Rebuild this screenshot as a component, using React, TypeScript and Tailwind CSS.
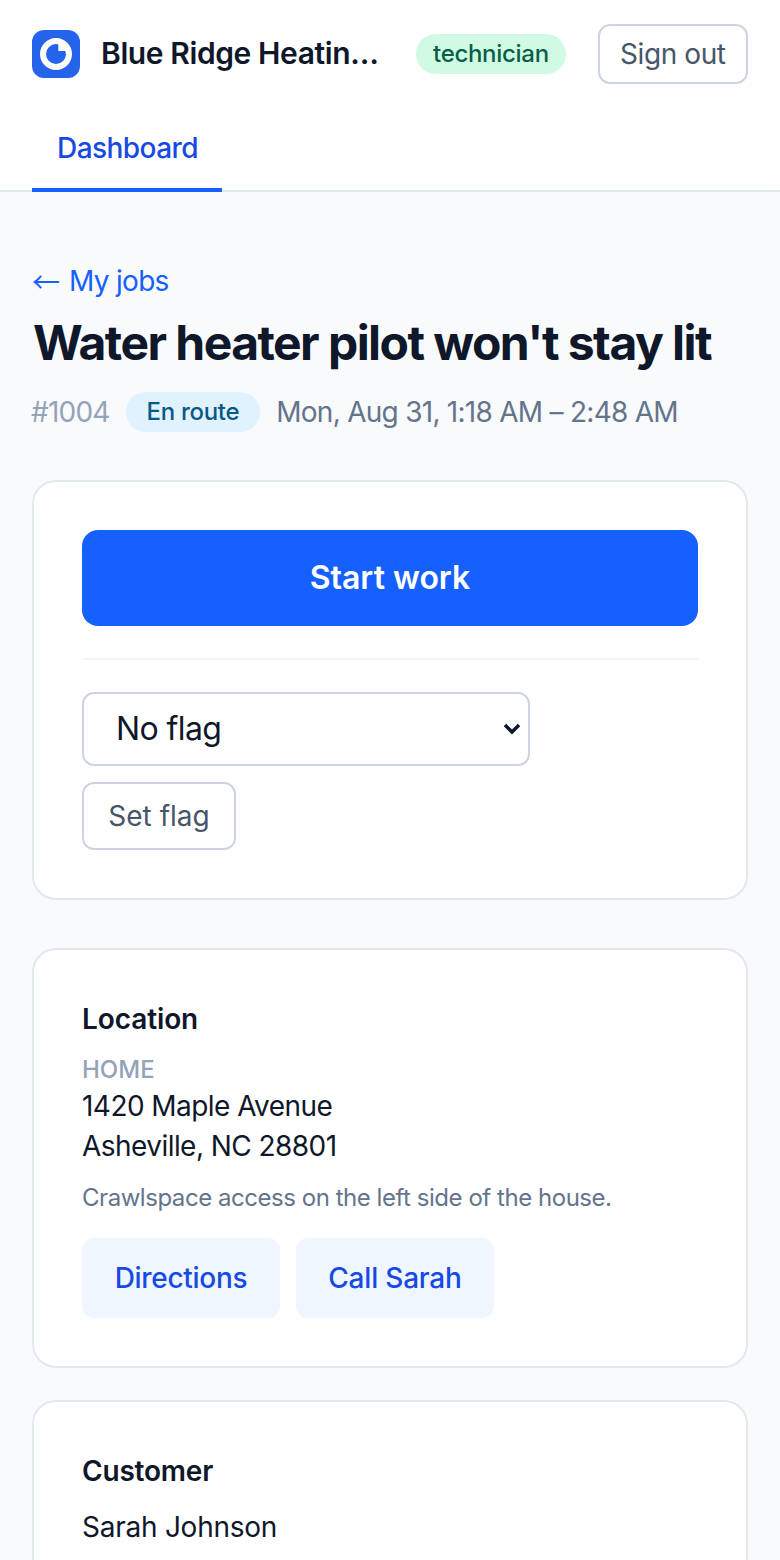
export default function App() {
  return (
    <div className="h-[1560px] overflow-hidden bg-[#f8fafc] font-['Inter',sans-serif] text-[#0f172a]">
      {/* Header */}
      <header className="border-b-2 border-[#e2e8f0] bg-white">
        <div className="flex h-[108px] items-start px-8 pt-6">
          <div className="mt-[6px] flex h-12 w-12 shrink-0 items-center justify-center rounded-xl bg-[#2563eb]">
            <svg width="36" height="36" viewBox="0 0 36 36">
              <circle cx="18" cy="18" r="13" fill="none" stroke="#fff" strokeWidth="6" />
              <path d="M20.3 15 V5.2 A13 13 0 0 1 30.65 15 Z" fill="#fff" />
            </svg>
          </div>
          <div className="ml-[21px] mt-[9px] w-[279px] truncate text-[30px] font-semibold leading-[40px] tracking-[-0.4px]">
            Blue Ridge Heating &amp; Air
          </div>
          <span className="ml-[36px] mt-[10px] rounded-full bg-[#d1fae5] px-[17px] py-[4px] text-[24px] font-medium leading-8 tracking-[-0.3px] text-[#065f46]">
            technician
          </span>
          <button className="ml-8 h-[60px] w-[150px] shrink-0 rounded-xl border-2 border-[#cbd5e1] bg-white text-[28px] tracking-[-0.4px] text-[#475569]">
            Sign out
          </button>
        </div>
        <nav className="px-8">
          <a className="-mb-[2px] block h-[84px] w-[190px] border-b-4 border-[#1660ff] pl-[25px] pt-5 text-[28px] font-medium leading-10 tracking-[-0.55px] text-[#174ae4]">
            Dashboard
          </a>
        </nav>
      </header>

      <main className="px-8 pt-[69px]">
        <a className="flex items-center text-[28px] leading-10 tracking-[-0.7px] text-[#1660ff]">
          <span className="font-['Noto_Sans_CJK_SC',sans-serif] tracking-normal">←</span>
          <span className="ml-[9px]">My jobs</span>
        </a>
        <h1 className="ml-px mt-3 text-[48px] font-bold leading-[60px] tracking-[-1.54px]">
          Water heater pilot won't stay lit
        </h1>
        <div className="mt-[18px] flex items-center">
          <span className="-ml-px text-[28px] tracking-[-0.8px] text-[#94a3b8]">#1004</span>
          <span className="ml-4 rounded-full bg-[#e0f2fe] px-[21px] py-1 text-[24px] font-medium leading-8 tracking-[-0.3px] text-[#075985]">
            En route
          </span>
          <span className="ml-4 text-[28px] tracking-[-0.73px] text-[#64748b]">Mon, Aug 31, 1:18 AM – 2:48 AM</span>
        </div>

        {/* Actions */}
        <section className="mt-[47px] rounded-3xl border-2 border-[#e2e8f0] bg-white p-12">
          <button className="h-24 w-full rounded-2xl bg-[#1660ff] text-[32px] font-semibold text-white">
            Start work
          </button>
          <div className="mt-8 border-t-2 border-[#f1f5f9] pt-8">
            <div className="relative w-[448px]">
              <select className="block h-[74px] w-full appearance-none rounded-xl border-2 border-[#cbd5e1] bg-white pl-8 pr-8 text-[32px] tracking-[-0.6px] text-[#0f172a]">
                <option>No flag</option>
              </select>
              <svg className="pointer-events-none absolute right-[8px] top-[30px]" width="20" height="14" viewBox="0 0 20 14">
                <path d="M3 3 L10 10 L17 3" fill="none" stroke="#0f172a" strokeWidth="3.5" />
              </svg>
            </div>
            <button className="mt-4 block h-[68px] w-[154px] rounded-xl border-2 border-[#cbd5e1] bg-white text-[28px] text-[#475569]">
              Set flag
            </button>
          </div>
        </section>

        {/* Location */}
        <section className="mt-12 rounded-3xl border-2 border-[#e2e8f0] bg-white p-12">
          <h2 className="mt-px text-[28px] font-semibold leading-10 tracking-[-0.1px]">Location</h2>
          <div className="mt-[15px] text-[24px] font-medium leading-8 text-[#94a3b8]">HOME</div>
          <div className="text-[28px] leading-10 tracking-[-0.55px]">1420 Maple Avenue</div>
          <div className="text-[28px] leading-10 tracking-[-0.55px]">Asheville, NC 28801</div>
          <p className="mt-[14px] text-[24px] leading-9 tracking-[-0.46px] text-[#64748b]">
            Crawlspace access on the left side of the house.
          </p>
          <div className="mt-[22px] flex gap-4">
            <a className="flex h-20 w-[198px] items-center justify-center rounded-xl bg-[#eff6ff] text-[28px] font-medium tracking-[-0.3px] text-[#174ae4]">
              Directions
            </a>
            <a className="flex h-20 w-[198px] items-center justify-center rounded-xl bg-[#eff6ff] text-[28px] font-medium tracking-[-0.2px] text-[#174ae4]">
              Call Sarah
            </a>
          </div>
        </section>

        {/* Customer */}
        <section className="mt-8 rounded-3xl border-2 border-[#e2e8f0] bg-white p-12">
          <h2 className="mt-px text-[28px] font-semibold leading-10 tracking-[-0.2px]">Customer</h2>
          <div className="mt-4 text-[28px] leading-10 tracking-[-0.25px]">Sarah Johnson</div>
        </section>
      </main>
    </div>
  );
}
